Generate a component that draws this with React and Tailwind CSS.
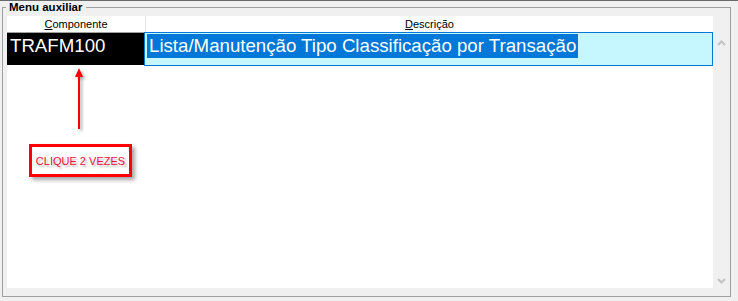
import React from "react";

export default function App() {
  return (
    <div
      className="relative w-[738px] h-[301px] overflow-hidden bg-[#f0f0f0] border-t border-[#6a6a6a]"
      style={{ fontFamily: '"Liberation Sans", Arial, sans-serif' }}
    >
      {/* Group box */}
      <div className="relative mt-[6px] ml-[2px] w-[729px] h-[290px] border border-[#a0a0a0] pt-[8px] pl-[4px] pb-[8px] flex">
        <div className="absolute -top-[8px] left-[3px] px-[3px] bg-[#f0f0f0] text-[11.5px] font-bold leading-[14px] text-black">
          Menu auxiliar
        </div>

        {/* Grid */}
        <div className="w-[706px] h-[272px] bg-white flex flex-col">
          {/* Header */}
          <div className="flex h-[16px] text-[11px] leading-[15px] text-black">
            <div className="w-[139px] border-r border-[#e3e3e3] flex justify-center pt-[1px]">
              <span>
                <span className="underline underline-offset-[1px]">C</span>omponente
              </span>
            </div>
            <div className="flex-1 flex justify-center pt-[1px]">
              <span>
                <span className="underline underline-offset-[1px]">D</span>escrição
              </span>
            </div>
          </div>

          {/* Row */}
          <div className="flex h-[34px] text-[18.67px] leading-[24px]">
            <div className="w-[139px] flex flex-col">
              <div className="h-[1px] bg-[#a0a0a0]" />
              <div className="h-[32px] bg-black text-white pl-[3px] pt-[1px] whitespace-nowrap">
                TRAFM100
              </div>
            </div>
            <div className="w-[569px] h-[34px] border border-[#0078d7] bg-[#c6f7fe] pl-[2px] pt-[1px] shrink-0">
              <span className="inline-block bg-[#0078d7] text-white px-[2px] whitespace-nowrap">
                Lista/Manutenção Tipo Classificação por Transação
              </span>
            </div>
          </div>
        </div>

        {/* Vertical scrollbar */}
        <div className="w-[17px] h-[272px] flex flex-col items-center justify-between pt-[24px] pb-[4px] bg-[#f0f0f0]">
          <svg width="9" height="6" viewBox="0 0 9 6">
            <path d="M1 5 L4.5 1.5 L8 5" fill="none" stroke="#c2c2c2" strokeWidth="2" />
          </svg>
          <svg width="9" height="6" viewBox="0 0 9 6">
            <path d="M1 1 L4.5 4.5 L8 1" fill="none" stroke="#c2c2c2" strokeWidth="2" />
          </svg>
        </div>
      </div>

      {/* Annotation arrow */}
      <svg
        className="absolute left-[70px] top-[64px]"
        width="20"
        height="70"
        viewBox="0 0 20 70"
        style={{ filter: "drop-shadow(2px 2px 1.5px rgba(0,0,0,0.35))" }}
      >
        <line x1="9" y1="8" x2="9" y2="64" stroke="#ff0000" strokeWidth="2" />
        <path d="M5 12 L9 3 L13 12 Z" fill="#ff0000" />
      </svg>

      {/* Annotation callout */}
      <div
        className="absolute left-[29px] top-[143px] w-[103px] h-[33px] border-[3px] border-[#ff0000] bg-white flex items-center justify-center"
        style={{ boxShadow: "3px 3px 4px rgba(0,0,0,0.35)" }}
      >
        <span
          className="text-[11px] leading-[12px] text-[#f0103a] whitespace-nowrap"
          style={{ textShadow: "2px 2px 2px rgba(0,0,0,0.3)" }}
        >
          CLIQUE 2 VEZES
        </span>
      </div>
    </div>
  );
}
